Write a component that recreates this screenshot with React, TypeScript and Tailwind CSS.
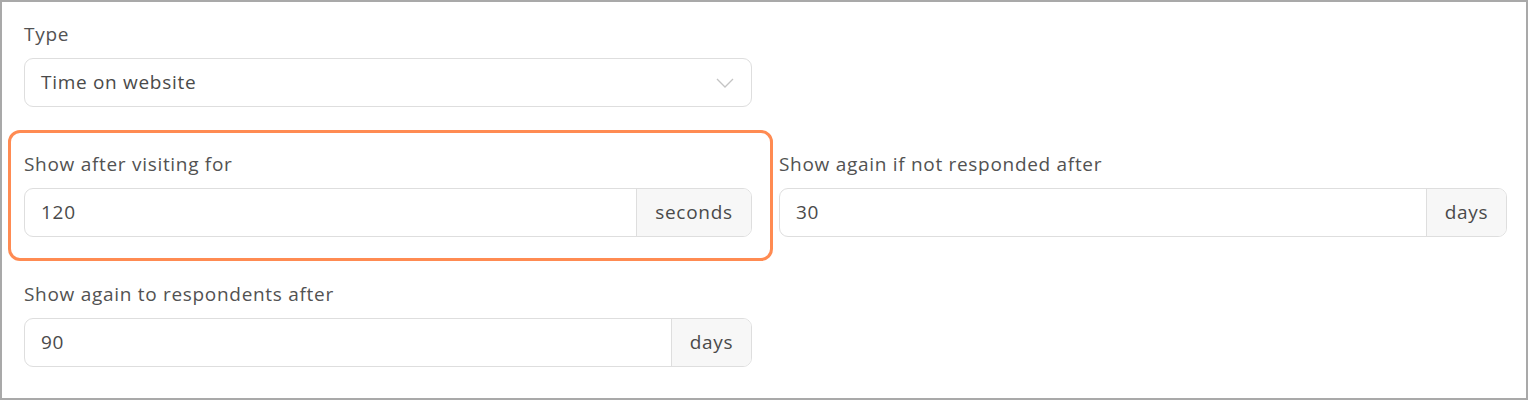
import React from 'react';

function Label({ children }: { children: React.ReactNode }) {
  return <div className="h-[24px] mb-[12px] text-[19px] leading-[24px] tracking-[0.7px] text-[#525252]">{children}</div>;
}

function AddonInput({ value, unit, unitWidth }: { value: string; unit: string; unitWidth: string }) {
  return (
    <div className="flex h-[49px] rounded-[9px] border border-[#dedede] overflow-hidden bg-white">
      <div className="flex-1 flex items-center px-[16px] text-[19px] tracking-[0.7px] text-[#4a4a4a]">{value}</div>
      <div className={`${unitWidth} flex items-center justify-center border-l border-[#dedede] bg-[#f7f7f7] text-[19px] tracking-[0.7px] text-[#4a4a4a]`}>
        {unit}
      </div>
    </div>
  );
}

export default function App() {
  return (
    <div
      className="w-[1528px] h-[400px] border-2 border-[#a9a9a9] bg-white pt-[20px] pl-[22px] pr-[19px]"
      style={{ fontFamily: '"Open Sans", Lato, sans-serif' }}
    >
      <div className="grid grid-cols-2 gap-x-[27px] gap-y-[45px]">
        <div>
          <Label>Type</Label>
          <div className="flex h-[49px] items-center justify-between rounded-[9px] border border-[#dedede] px-[16px] text-[19px] tracking-[0.7px] text-[#4a4a4a]">
            <span>Time on website</span>
            <svg width="18" height="10" viewBox="0 0 18 10" fill="none" className="mr-[1px]">
              <path d="M1 1l8 8 8-8" stroke="#c4c4c4" strokeWidth="1.3" />
            </svg>
          </div>
        </div>
        <div />
        <div className="relative">
          <div className="absolute -left-[16px] -top-[22px] -right-[21px] -bottom-[24px] rounded-[12px] border-[3px] border-[#ff8b52] pointer-events-none" />
          <Label>Show after visiting for</Label>
          <AddonInput value="120" unit="seconds" unitWidth="w-[115px]" />
        </div>
        <div>
          <Label>Show again if not responded after</Label>
          <AddonInput value="30" unit="days" unitWidth="w-[80px]" />
        </div>
        <div>
          <Label>Show again to respondents after</Label>
          <AddonInput value="90" unit="days" unitWidth="w-[80px]" />
        </div>
      </div>
    </div>
  );
}
